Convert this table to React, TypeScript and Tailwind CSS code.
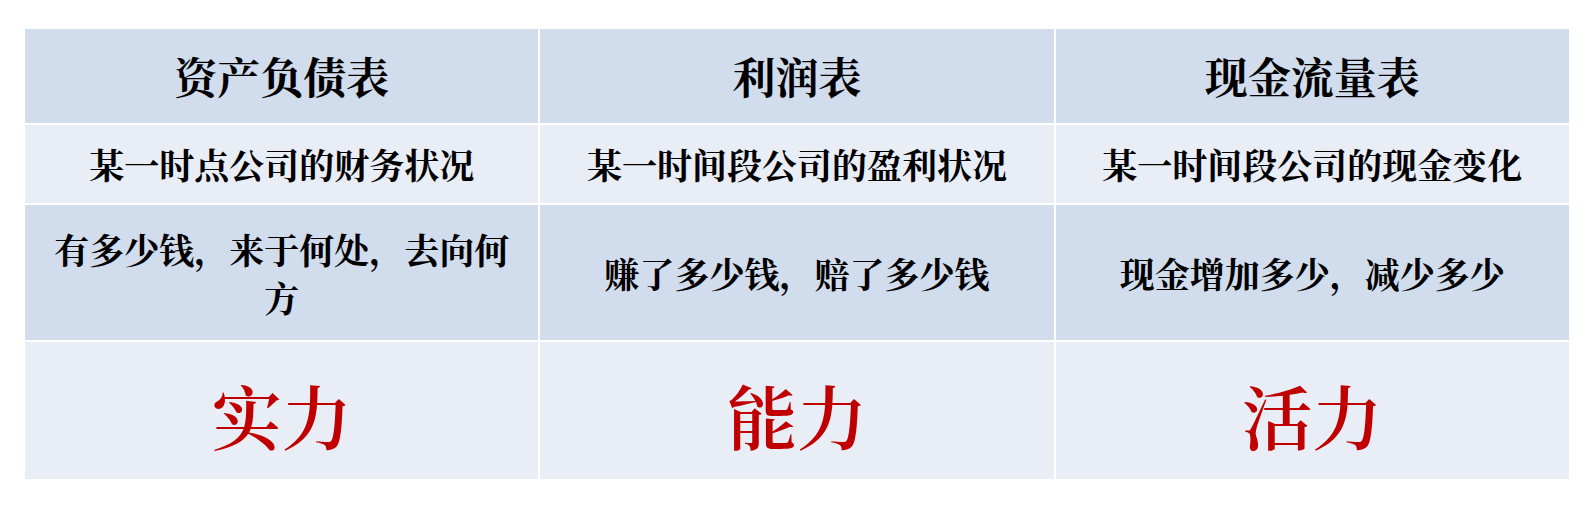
import React from 'react'

const CJK = "font-['Noto_Serif_CJK_SC','Noto_Sans_CJK_SC','Liberation_Serif',serif]"

const columns = [
  { title: '资产负债表', scope: '某一时点公司的财务状况', question: '有多少钱，来于何处，去向何方', verdict: '实力' },
  { title: '利润表', scope: '某一时间段公司的盈利状况', question: '赚了多少钱，赔了多少钱', verdict: '能力' },
  { title: '现金流量表', scope: '某一时间段公司的现金变化', question: '现金增加多少，减少多少', verdict: '活力' },
]

export default function App() {
  return (
    <div className={`w-[1591px] h-[509px] bg-white pt-[29px] pl-[25px] ${CJK}`}>
      <div className="w-[1544px] grid grid-cols-3 gap-[2px] grid-rows-[94px_78px_135px_137px]">
        {columns.map((c) => (
          <div key={c.title + 'h'} className="bg-[#d1dcec] flex items-center justify-center text-[43px] font-bold text-black">
            {c.title}
          </div>
        ))}
        {columns.map((c) => (
          <div key={c.title + 's'} className="bg-[#e8edf6] flex items-center justify-center text-[35px] font-bold text-black">
            {c.scope}
          </div>
        ))}
        {columns.map((c) => (
          <div key={c.title + 'q'} className="bg-[#d1dcec] flex items-center justify-center px-[24px] text-center text-[35px] leading-[48px] font-bold text-black">
            {c.question}
          </div>
        ))}
        {columns.map((c) => (
          <div key={c.title + 'v'} className="bg-[#e8edf6] flex items-center justify-center pt-[8px] text-[70px] font-semibold text-[#c00000]">
            {c.verdict}
          </div>
        ))}
      </div>
    </div>
  )
}
